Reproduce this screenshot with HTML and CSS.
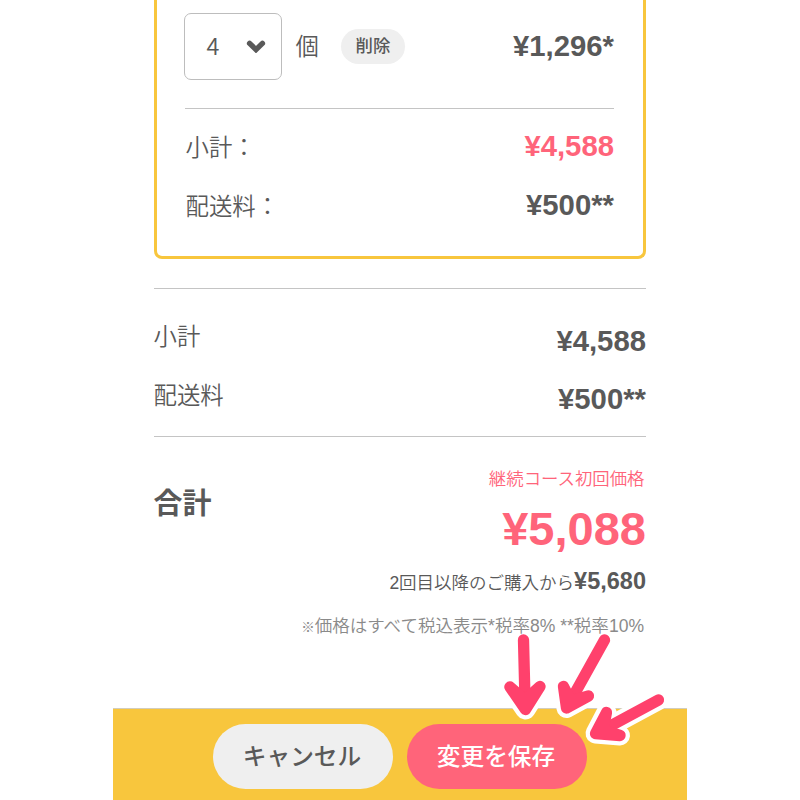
FILE: index.html
```html
<!DOCTYPE html>
<html lang="ja">
<head>
    <meta charset="UTF-8">
    <meta name="viewport" content="width=device-width, initial-scale=1.0">
    <title>ご注文内容の変更</title>
    <link rel="stylesheet" href="styles.css">
</head>
<body>
    <div class="page">
        <main class="content">
            <!-- 商品ボックス -->
            <section class="item-box">
                <div class="item-row">
                    <button class="quantity" type="button">
                        <span>4</span>
                        <svg class="chevron" viewBox="0 0 20 14" aria-hidden="true">
                            <path d="M3.6 4.4 L10 10.6 L16.4 4.4"></path>
                        </svg>
                    </button>
                    <span class="unit">個</span>
                    <button class="delete" type="button">削除</button>
                    <span class="price">¥1,296*</span>
                </div>
                <div class="row">
                    <span class="label">小計：</span>
                    <span class="price pink">¥4,588</span>
                </div>
                <div class="row">
                    <span class="label">配送料：</span>
                    <span class="price">¥500**</span>
                </div>
            </section>

            <!-- 小計 -->
            <section class="summary">
                <div class="row">
                    <span class="label">小計</span>
                    <span class="price">¥4,588</span>
                </div>
                <div class="row">
                    <span class="label">配送料</span>
                    <span class="price">¥500**</span>
                </div>
            </section>

            <!-- 合計 -->
            <section class="total">
                <h2>合計</h2>
                <div class="total-detail">
                    <p class="course">継続コース初回価格</p>
                    <p class="total-price">¥5,088</p>
                    <p class="next">2回目以降のご購入から<strong>¥5,680</strong></p>
                </div>
            </section>
            <p class="note"><span class="mark">※</span>価格はすべて税込表示*税率8% **税率10%</p>
        </main>

        <footer class="actions">
            <button class="btn cancel" type="button">キャンセル</button>
            <button class="btn save" type="button">変更を保存</button>
        </footer>
    </div>

    <!-- 保存ボタンを指す矢印 -->
    <svg class="arrows" viewBox="510 625 170 130" aria-hidden="true">
        <defs>
            <g id="arrows">
                <path d="M523.5 640 L525 700"></path>
                <path d="M510 687 L525.5 709.5 L540 686.5 L525 700 Z"></path>
                <path d="M604.5 640 L570 702"></path>
                <path d="M563.5 686.5 L566.5 708 L588.5 696 L571 701 Z"></path>
                <path d="M658.5 700 L601 731"></path>
                <path d="M606.5 712.5 L595.5 733.5 L620 735.5 L603 730 Z"></path>
            </g>
            <clipPath id="edge">
                <rect x="490" y="650" width="200" height="110"></rect>
            </clipPath>
        </defs>
        <g clip-path="url(#edge)">
            <use class="arrow-edge" href="#arrows"></use>
        </g>
        <use class="arrow-line" href="#arrows"></use>
    </svg>
</body>
</html>
```

FILE: styles.css
```css
* {
    box-sizing: border-box;
}

body {
    margin: 0;
    height: 800px;
    overflow: hidden;
    background: #fff;
    color: #595959;
    font-family: "Liberation Sans", "Noto Sans CJK JP", sans-serif;
}

h2, p {
    margin: 0;
}

button {
    border: none;
    padding: 0;
    color: inherit;
    font-family: inherit;
}

.page {
    display: flex;
    flex-direction: column;
    width: 574px;
    height: 800px;
    margin-left: 113px;
}

.content {
    flex: 1;
    padding: 0 41px 0 40.5px;
}

/* 商品ボックス */
.item-box {
    height: 259px;
    padding: 13px 29px 0 28px;
    border: 3px solid #f8c63d;
    border-top: none;
    border-radius: 0 0 8px 8px;
}

.item-row {
    display: flex;
    align-items: center;
    height: 96px;
    padding-bottom: 29px;
    margin-bottom: 8px;
    border-bottom: 1.5px solid #c4c4c4;
}

.quantity {
    display: flex;
    align-items: center;
    justify-content: space-between;
    width: 98px;
    height: 67px;
    margin-left: -1px;
    padding: 0 15px 0 22px;
    border: 1.5px solid #bdbdbd;
    border-radius: 7px;
    background: #fff;
    font-family: "Noto Sans CJK JP", sans-serif;
    font-size: 23.5px;
    font-weight: 350;
}

.quantity span {
    padding-bottom: 2px;
}

.chevron {
    width: 20px;
    height: 14px;
}

.chevron path {
    fill: none;
    stroke: #595959;
    stroke-width: 5.4;
    stroke-linecap: round;
}

.unit {
    margin-left: 14px;
    padding-bottom: 2px;
    font-family: "Noto Sans CJK JP", sans-serif;
    font-size: 23.4px;
    font-weight: 350;
}

.delete {
    width: 64px;
    height: 35px;
    margin-left: 22px;
    padding-bottom: 3px;
    border-radius: 18px;
    background: #efefef;
    font-family: "Noto Sans CJK JP", sans-serif;
    font-size: 17.4px;
    font-weight: 500;
}

.row {
    display: flex;
    align-items: center;
    justify-content: space-between;
    height: 58.5px;
}

.label {
    font-family: "Noto Sans CJK JP", sans-serif;
    font-size: 23.4px;
    font-weight: 350;
}

.item-box .label {
    padding-left: 1px;
}

.price {
    margin-left: auto;
    font-size: 29.3px;
    font-weight: 700;
}

.pink {
    color: #ff647a;
}

/* 小計 */
.summary {
    height: 149px;
    margin-top: 29px;
    padding-top: 22.5px;
    border-top: 1.5px solid #c4c4c4;
    border-bottom: 1.5px solid #c4c4c4;
}

.summary .label {
    margin-top: -11px;
}

/* 合計 */
.total {
    display: flex;
    justify-content: space-between;
    padding-top: 29px;
}

.total h2 {
    padding-top: 14px;
    font-family: "Noto Sans CJK JP", sans-serif;
    font-size: 29px;
    line-height: 43px;
    font-weight: 700;
}

.total-detail {
    text-align: right;
}

.course {
    padding-right: 1.5px;
    color: #ff647a;
    font-size: 17.4px;
    font-weight: 350;
    line-height: 26px;
}

.total-price {
    color: #ff647a;
    font-size: 47px;
    font-weight: 700;
    line-height: 74px;
}

.next {
    font-size: 17.5px;
    font-weight: 350;
    line-height: 30px;
}

.next strong {
    font-size: 23.5px;
    font-weight: 700;
}

.note {
    margin-top: 14px;
    padding-right: 2px;
    color: #8a8a8a;
    font-size: 17.55px;
    font-weight: 350;
    line-height: 28px;
    text-align: right;
    white-space: nowrap;
}

.mark {
    font-size: 13.5px;
}

/* フッター */
.actions {
    display: flex;
    justify-content: center;
    gap: 14px;
    height: 92px;
    padding-top: 15px;
    border-top: 1px solid #d2cdbd;
    background: #f8c63d;
}

.btn {
    width: 180px;
    height: 65px;
    padding: 0 2px 4px 0;
    border-radius: 33px;
    font-family: "Noto Sans CJK JP", sans-serif;
    font-size: 23.7px;
    font-weight: 500;
}

.cancel {
    background: #efefef;
}

.save {
    background: #ff647a;
    color: #fff;
}

/* 矢印 */
.arrows {
    position: absolute;
    left: 510px;
    top: 625px;
    width: 170px;
    height: 130px;
    overflow: visible;
    fill: none;
    stroke-linecap: round;
    stroke-linejoin: round;
    pointer-events: none;
}

.arrow-edge {
    stroke: #fff;
    stroke-width: 20px;
}

.arrow-line {
    fill: #ff416c;
    stroke: #ff416c;
    stroke-width: 11.3px;
}
```
